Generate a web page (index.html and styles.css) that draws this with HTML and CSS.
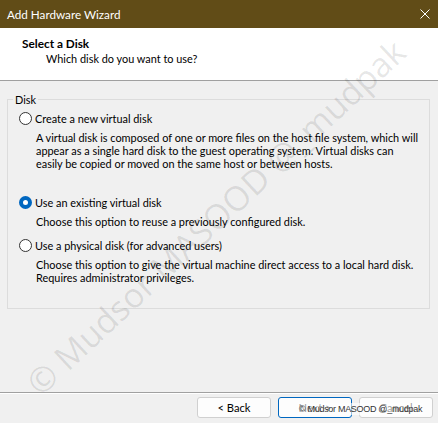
FILE: index.html
```html
<!DOCTYPE html>
<html>
<head>
<meta charset="utf-8">
<link rel="stylesheet" href="styles.css">
</head>
<body>
<div class="window">
  <div class="titlebar">
    <span class="title">Add Hardware Wizard</span>
    <svg class="close" width="10" height="10" viewBox="0 0 10 10"><path d="M0.5 0.5L9.5 9.5M9.5 0.5L0.5 9.5" stroke="#fff" stroke-width="1"/></svg>
  </div>
  <div class="header">
    <div class="h-title">Select a Disk</div>
    <div class="h-sub">Which disk do you want to use?</div>
  </div>
  <div class="content">
    <fieldset class="group">
      <legend class="legend">Disk</legend>
      <div class="option">
        <span class="radio"></span><span class="opt-label">Create a new virtual disk</span>
      </div>
      <div class="desc">A virtual disk is composed of one or more files on the host file system, which will<br>appear as a single hard disk to the guest operating system. Virtual disks can<br>easily be copied or moved on the same host or between hosts.</div>
      <div class="option opt-2">
        <span class="radio checked"></span><span class="opt-label">Use an existing virtual disk</span>
      </div>
      <div class="desc">Choose this option to reuse a previously configured disk.</div>
      <div class="option opt-3">
        <span class="radio"></span><span class="opt-label">Use a physical disk (for advanced users)</span>
      </div>
      <div class="desc">Choose this option to give the virtual machine direct access to a local hard disk.<br>Requires administrator privileges.</div>
    </fieldset>
  </div>
  <div class="footer">
    <button class="btn">&lt; Back</button>
    <button class="btn focused">Next &gt;</button>
    <button class="btn">Cancel</button>
  </div>
  <span class="watermark">© Mudsor MASOOD @_mudpak</span>
  <span class="stamp">© Mudsor MASOOD @_mudpak</span>
</div>
</body>
</html>
```
FILE: styles.css
```css
* { box-sizing: border-box; }
html, body { margin: 0; padding: 0; }
body {
  width: 438px;
  height: 423px;
  overflow: hidden;
  font-family: Lato, "Noto Sans", sans-serif;
  font-size: 10.9px;
  color: #000;
  background: #f0f0f0;
}
.window {
  position: relative;
  width: 438px;
  height: 423px;
  display: flex;
  flex-direction: column;
  overflow: hidden;
}
.titlebar {
  height: 28px;
  flex: none;
  background: #614c17;
  color: #fff;
  display: flex;
  align-items: center;
  justify-content: space-between;
  padding: 0 8px 0 7px;
  font-size: 11.7px;
}
.title { line-height: 28px; }
.close { display: block; }
.header {
  height: 53px;
  flex: none;
  background: #fff;
  border-bottom: 1px solid #a0a0a0;
  padding: 9px 0 0 22px;
}
.h-title { font-weight: bold; font-size: 11.8px; line-height: 13px; }
.h-sub { line-height: 13px; margin-top: 2px; padding-left: 24px; }
.content {
  flex: 1;
  padding: 12px 8px 0 7px;
}
.group {
  margin: 0;
  border: 1px solid #dcdcdc;
  padding: 4px 4px 24px 11px;
  min-width: 0;
}
.legend {
  padding: 0 2px;
  margin-left: -6px;
  line-height: 13px;
}
.option {
  display: flex;
  align-items: center;
  height: 16px;
}
.opt-2 { margin-top: 24px; }
.opt-3 { margin-top: 9px; }
.radio {
  width: 13px;
  height: 13px;
  border: 1px solid #333;
  border-radius: 50%;
  background: #fff;
  flex: none;
  margin-right: 3px;
}
.radio.checked {
  border: 4px solid #0067c0;
  background: #fff;
}
.desc {
  margin-top: 5px;
  padding-left: 17px;
  line-height: 13px;
  white-space: nowrap;
}
.footer {
  height: 31px;
  flex: none;
  border-top: 1px solid #a0a0a0;
  box-shadow: inset 0 1px 0 #fff;
  display: flex;
  justify-content: flex-end;
  align-items: flex-start;
  gap: 7px;
  padding: 4px 5px 0 0;
}
.btn {
  width: 74px;
  height: 21px;
  background: #fdfdfd;
  border: 1px solid #d0d0d0;
  border-radius: 3px;
  font-family: inherit;
  font-size: 11.2px;
  color: #000;
  padding: 0;
}
.btn.focused { border-color: #0067c0; }
.watermark {
  position: absolute;
  left: 32px;
  top: 366px;
  font-family: "Open Sans", sans-serif;
  font-size: 34px;
  line-height: 44px;
  white-space: nowrap;
  color: rgba(0, 0, 0, 0.1);
  transform-origin: 0 50%;
  transform: rotate(-43deg);
  pointer-events: none;
}
.stamp {
  position: absolute;
  left: 298px;
  top: 403px;
  font-family: "Liberation Sans", sans-serif;
  font-size: 9px;
  line-height: 12px;
  letter-spacing: -0.3px;
  color: #333;
  background: rgba(255, 255, 255, 0.6);
  white-space: nowrap;
  padding: 0 1px;
}
```
